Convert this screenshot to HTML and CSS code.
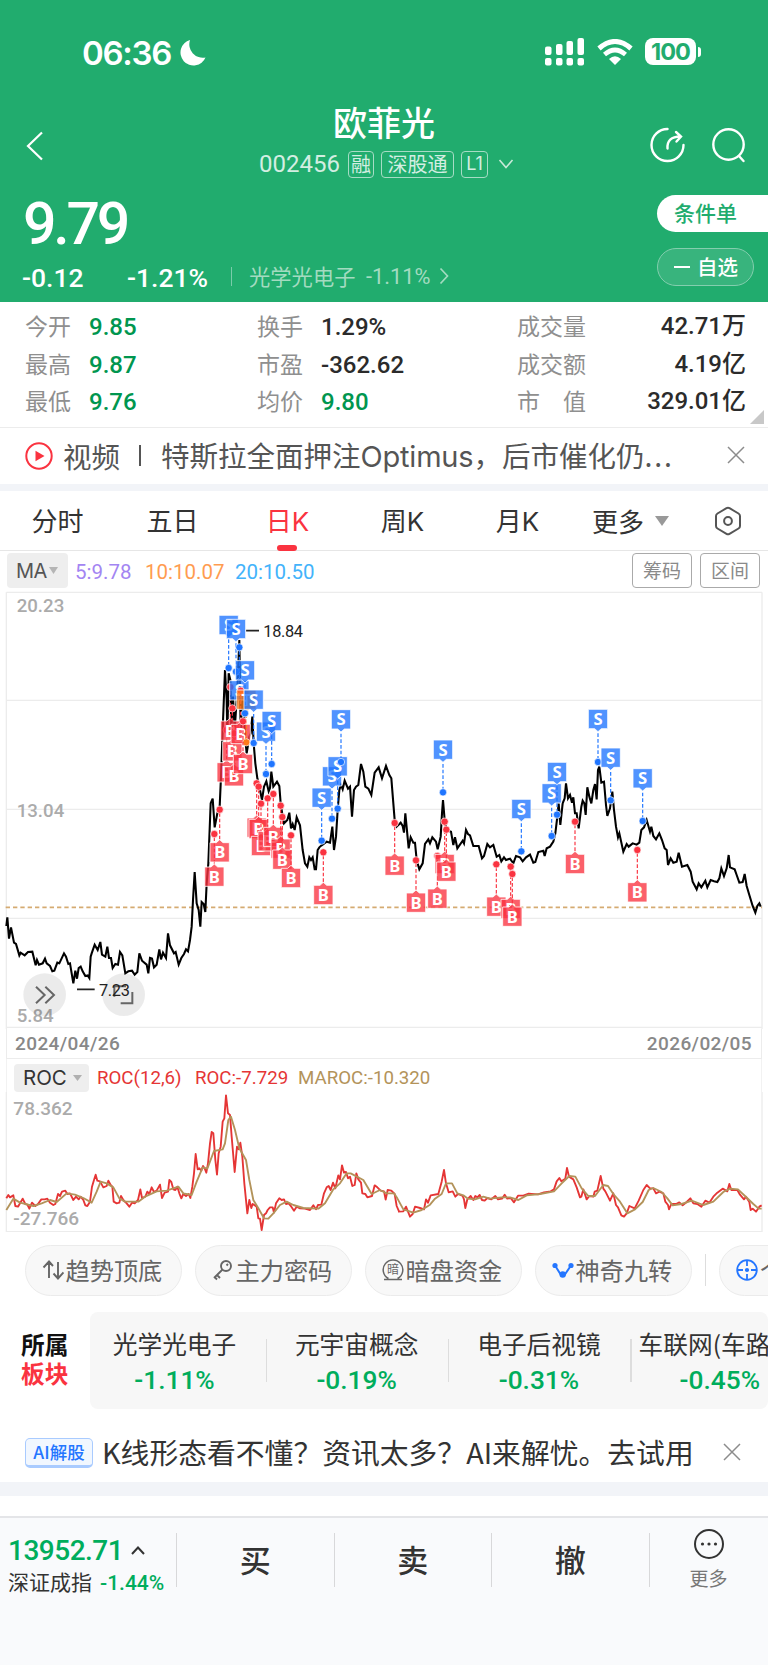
FILE: index.html
```html
<!DOCTYPE html>
<html lang="zh">
<head>
    <meta charset="utf-8">
    <title>欧菲光 002456</title>
    <link rel="stylesheet" href="styles.css">
</head>
<body>
    <header class="top">
        <div class="status">
            <span class="clock">06:36</span>
            <svg class="moon" width="26" height="26" viewBox="0 0 26 26"><path d="M10 0A13 13 0 1 0 25.500 17.500A13.500 13.500 0 0 1 10 0Z" fill="#fff"/></svg>
            <svg class="signal" width="40" height="28" viewBox="0 0 40 28" fill="#fff">
                <rect x="0" y="8.500" width="6.500" height="8.500" rx="2"/><rect x="11" y="6" width="6.500" height="11" rx="2"/><rect x="21.500" y="3" width="6.500" height="14" rx="2"/><rect x="32.500" y="0" width="6.500" height="17" rx="2"/>
                <rect x="0" y="20" width="6.500" height="7.500" rx="2"/><rect x="11" y="20" width="6.500" height="7.500" rx="2"/><rect x="21.500" y="20" width="6.500" height="7.500" rx="2"/><rect x="32.500" y="20" width="6.500" height="7.500" rx="2"/>
            </svg>
            <svg class="wifi" width="36" height="26" viewBox="0 0 36 26" fill="none" stroke="#fff">
                <path d="M2 9.500Q18 -4.500 34 9.500" stroke-width="5"/>
                <path d="M7.500 15.500Q18 6.500 28.500 15.500" stroke-width="4.600"/>
                <path d="M12 20Q18 14.500 24 20L18 26Z" fill="#fff" stroke="none"/>
            </svg>
            <span class="battery">100</span><i class="battery-cap"></i>
        </div>
        <div class="nav">
            <svg class="back" width="18" height="30" viewBox="0 0 18 30"><path d="M16 1.500L2 15L16 28.500" fill="none" stroke="#fff" stroke-width="2.200"/></svg>
            <div class="title">
                <h1>欧菲光</h1>
                <div class="code">
                    <span class="num">002456</span>
                    <b class="t1">融</b><b class="t2">深股通</b><b class="t3">L1</b>
                    <svg width="16" height="10" viewBox="0 0 16 10"><path d="M1.500 1L8 8.500L14.500 1" fill="none" stroke="#c8ead9" stroke-width="1.600"/></svg>
                </div>
            </div>
            <div class="nav-icons">
                <svg width="36" height="36" viewBox="0 0 36 36" fill="none" stroke="#fff" stroke-width="2.400" stroke-linecap="round">
                    <path d="M17.500 2A16 16 0 1 0 33.500 18"/>
                    <path d="M17.500 21.500C17 14 21 9.500 30.500 9.500M26 5L31 9.500L26.500 14.500"/>
                </svg>
                <svg width="36" height="36" viewBox="0 0 36 36" fill="none" stroke="#fff" stroke-width="2.400" stroke-linecap="round">
                    <circle cx="17.500" cy="17.500" r="15.200"/><path d="M28 29L32.500 34"/>
                </svg>
            </div>
        </div>
        <div class="quote">
            <div class="quote-left">
                <div class="price num">9.79</div>
                <div class="change">
                    <span class="num chg">-0.12</span><span class="num pct">-1.21%</span><i></i>
                    <span class="ind">光学光电子</span><span class="num indp">-1.11%</span>
                    <svg width="10" height="18" viewBox="0 0 10 18"><path d="M1.500 1.500L8.500 9L1.500 16.500" fill="none" stroke="#a3dbc0" stroke-width="1.700"/></svg>
                </div>
            </div>
            <div class="quote-right">
                <span class="cond">条件单</span>
                <span class="fav"><i></i>自选</span>
            </div>
        </div>
    </header>

    <section class="stats">
        <div><label>今开</label><span class="num g">9.85</span></div>
        <div><label>换手</label><span class="num">1.29%</span></div>
        <div class="r"><label>成交量</label><span class="num">42.71<em>万</em></span></div>
        <div><label>最高</label><span class="num g">9.87</span></div>
        <div><label>市盈</label><span class="num">-362.62</span></div>
        <div class="r"><label>成交额</label><span class="num">4.19<em>亿</em></span></div>
        <div><label>最低</label><span class="num g">9.76</span></div>
        <div><label>均价</label><span class="num g">9.80</span></div>
        <div class="r"><label>市　值</label><span class="num">329.01<em>亿</em></span></div>
        <svg class="corner" width="14" height="14"><path d="M14 0V14H0Z" fill="#c8c8c8"/></svg>
    </section>

    <section class="news">
        <svg width="28" height="28" viewBox="0 0 28 28"><circle cx="14" cy="14" r="12.700" fill="none" stroke="#fa3340" stroke-width="2"/><path d="M10.500 8.800L19.500 14L10.500 19.200Z" fill="#fa3340"/></svg>
        <span class="tag">视频</span><i></i>
        <span class="headline">特斯拉全面押注<u>Optimus</u>，后市催化仍<s>...</s></span>
        <svg class="close" width="18" height="18" viewBox="0 0 18 18"><path d="M1 1L17 17M17 1L1 17" stroke="#8c8c8c" stroke-width="1.500"/></svg>
    </section>

    <nav class="tabs">
        <span>分时</span><span>五日</span><span class="on">日<u>K</u></span><span>周<u>K</u></span><span>月<u>K</u></span>
        <span class="more">更多<svg width="14" height="10"><path d="M0 0H14L7 10Z" fill="#999"/></svg></span>
        <svg class="gear" width="28" height="30" viewBox="0 0 28 30" fill="none" stroke="#555" stroke-width="2"><path d="M12.500 2.200Q14 1.300 15.500 2.200L24.500 7.500Q26 8.400 26 10V20Q26 21.600 24.500 22.500L15.500 27.800Q14 28.700 12.500 27.800L3.500 22.500Q2 21.600 2 20V10Q2 8.400 3.500 7.500Z"/><circle cx="14" cy="15" r="3.900"/></svg>
    </nav>

    <section class="ma">
        <span class="sel">MA<svg width="9" height="7"><path d="M0 0H9L4.500 7Z" fill="#b5b5b5"/></svg></span>
        <span class="num m5">5:9.78</span><span class="num m10">10:10.07</span><span class="num m20">20:10.50</span>
        <span class="btn">筹码</span><span class="btn">区间</span>
    </section>

    <!-- chart units are thirds of a pixel -->
    <svg class="kline" id="kline" width="768" height="439" viewBox="0 0 2304 1317">
        <g class="grid">
            <path d="M19 7H2286M19 331H2286M19 658H2286M19 985H2286M19 1312H2286M19 7V1317M2286 7V1317"/>
        </g>
        <text class="axis" x="50" y="65">20.23</text>
        <text class="axis" x="50" y="680">13.04</text>
        <text class="axis" x="50" y="1297">5.84</text>
        <path d="M17 952H2286" stroke="#d5ab72" stroke-width="5" stroke-dasharray="13 9"/>
        <polyline class="price-line" points="19,1008 22,982 27,1046 33,1012 42,1058 48,1062 58,1096 62,1088 74,1096 84,1086 97,1085 107,1126 111,1110 117,1124 128,1120 135,1106 140,1120 150,1128 157,1144 163,1142 172,1118 178,1120 192,1090 198,1100 205,1122 210,1120 220,1180 226,1142 231,1166 236,1134 242,1130 248,1144 256,1158 263,1156 268,1164 272,1100 275,1090 284,1064 293,1080 301,1056 306,1094 316,1100 322,1070 327,1104 333,1104 338,1134 346,1122 354,1124 360,1086 367,1096 376,1150 385,1144 396,1142 404,1154 412,1146 418,1090 426,1112 440,1124 445,1150 450,1104 456,1106 462,1132 470,1124 478,1078 483,1108 489,1088 498,1104 504,1030 510,1066 522,1090 527,1086 536,1124 544,1104 552,1092 558,1078 564,1084 570,1050 575,1010 579,930 584,846 590,940 596,960 601,1010 605,936 611,942 616,966 620,880 625,820 632,640 638,626 644,712 652,670 659,650 663,560 668,420 675,240 680,330 682,440 686,250 691,270 694,420 699,320 704,420 712,300 718,150 722,420 730,300 735,440 740,490 748,440 752,430 757,380 761,460 766,520 772,565 778,590 786,630 792,590 799,574 806,604 810,594 814,545 820,590 831,575 838,588 842,640 848,680 852,700 862,690 868,668 873,715 878,702 884,720 890,682 900,706 908,780 915,820 922,830 928,802 933,810 938,802 944,838 948,838 953,780 958,772 965,766 980,755 990,758 997,710 1002,780 1008,740 1013,660 1018,600 1023,585 1028,598 1034,572 1044,596 1050,590 1056,680 1062,600 1068,590 1075,585 1083,522 1090,545 1096,590 1105,596 1114,615 1124,548 1136,532 1146,565 1158,528 1168,555 1174,565 1180,640 1184,690 1190,710 1202,698 1208,708 1212,728 1216,670 1226,775 1232,742 1240,758 1245,758 1250,810 1258,838 1268,820 1275,762 1285,748 1290,760 1297,742 1308,755 1313,778 1322,740 1326,670 1329,630 1334,690 1340,720 1353,725 1360,765 1365,742 1372,775 1388,752 1392,760 1398,720 1404,732 1410,736 1420,768 1436,768 1446,805 1452,798 1462,762 1470,772 1480,765 1490,800 1498,795 1504,814 1512,802 1518,810 1530,806 1540,820 1548,798 1560,802 1568,814 1578,802 1590,794 1600,818 1606,816 1615,786 1630,782 1634,798 1640,775 1650,770 1660,755 1666,730 1672,680 1676,640 1681,705 1688,640 1694,625 1698,580 1704,625 1710,615 1716,638 1720,622 1725,670 1730,670 1736,715 1744,650 1748,632 1753,640 1757,675 1762,592 1768,620 1774,640 1780,600 1785,582 1790,628 1794,540 1798,530 1804,578 1812,575 1818,645 1822,678 1830,655 1837,605 1842,660 1848,710 1854,742 1858,730 1870,785 1880,762 1886,770 1898,760 1910,764 1918,758 1924,720 1932,712 1940,690 1950,725 1954,710 1960,738 1968,748 1978,730 1986,750 1994,775 2000,780 2004,825 2012,805 2020,818 2030,815 2036,788 2046,830 2062,825 2072,845 2078,875 2090,898 2096,880 2104,892 2116,872 2122,892 2132,870 2142,874 2152,876 2158,865 2164,835 2172,858 2180,835 2186,795 2190,832 2204,838 2210,855 2218,878 2228,876 2234,852 2240,888 2248,915 2258,948 2266,968 2272,948 2278,940 2282,950"/>
        <g fill="#000" fill-opacity=".08"><circle cx="134" cy="1214" r="64"/><circle cx="371" cy="1214" r="64"/></g>
        <g fill="none" stroke="#666" stroke-width="6"><path d="M108 1190L134 1215L108 1240M136 1190L162 1215L136 1240M362 1240H397V1206M343 1220V1189H378"/></g>
        <path d="M738 122H777M231 1198H284" stroke="#222" stroke-width="5"/>
        <text class="peak" x="790" y="142">18.84</text>
        <text class="peak" x="297" y="1217">7.23</text>
        <g id="marks"></g>
    </svg>

    <div class="dates num"><span>2024/04/26</span><span>2026/02/05</span></div>

    <section class="roc">
        <div class="roc-head">
            <span class="sel">ROC<svg width="9" height="6"><path d="M0 0H9L4.500 6Z" fill="#b0b0b0"/></svg></span>
            <span class="r1">ROC(12,6)</span><span class="r2">ROC:-7.729</span><span class="r3">MAROC:-10.320</span>
        </div>
        <svg width="768" height="140" viewBox="0 126 2304 420">
            <path class="gridline" d="M19 126V545H2286V126"/>
            <text class="axis roc-axis" x="40" y="194">78.362</text>
            <text class="axis roc-axis" x="40" y="524">-27.766</text>
            <polyline class="red" points="19,445 25,435 30,442 40,436 46,468 54,470 68,446 76,462 82,464 88,476 96,458 106,468 114,462 124,448 134,448 142,446 150,458 160,465 166,462 174,432 180,438 186,425 196,422 202,432 210,430 220,450 228,440 236,448 242,440 250,450 256,466 262,468 270,455 276,410 282,390 287,374 292,392 300,394 310,412 320,408 325,392 332,405 337,410 341,455 350,460 358,458 363,438 370,450 380,460 388,470 396,458 404,460 414,450 421,418 426,444 436,440 442,425 448,432 455,412 462,426 470,422 480,404 486,444 494,428 504,425 508,390 514,396 520,418 526,420 532,410 538,430 544,445 550,432 558,438 566,432 571,444 577,410 582,370 587,312 593,358 598,355 604,362 609,348 614,355 619,368 624,340 630,280 635,246 640,250 646,330 651,374 656,310 662,290 668,215 673,205 678,136 684,190 690,195 695,260 704,366 711,290 716,298 721,278 727,320 733,400 742,490 748,450 754,474 758,462 770,470 775,505 780,506 785,540 792,495 798,490 803,480 810,472 818,472 822,488 828,460 838,445 845,450 852,448 858,462 866,460 874,470 882,482 890,470 900,475 915,476 930,480 940,466 948,478 954,465 964,464 972,430 980,412 986,408 992,420 999,398 1006,415 1015,376 1020,388 1026,346 1032,368 1038,366 1044,385 1050,380 1057,408 1064,405 1069,370 1075,388 1083,398 1087,430 1096,432 1102,442 1116,438 1124,406 1132,412 1142,422 1152,424 1157,449 1163,420 1174,422 1184,432 1190,468 1197,484"/>
            <polyline class="red" transform="translate(1140)" points="54,485 70,484 78,470 90,500 98,492 105,470 120,474 132,478 138,448 144,458 152,436 175,432 185,395 192,360 198,400 206,427 218,424 226,440 234,432 248,438 252,448 256,474 262,448 272,438 280,450 286,438 292,442 299,435 306,450 314,452 322,444 334,448 346,438 354,448 366,446 374,434 382,446 392,444 402,457 414,437 430,437 446,431 474,433 492,427 512,424 522,418 530,394 538,384 544,394 556,386 561,354 567,380 580,388 590,412 600,442 604,440 610,418 620,448 628,438 640,440 644,425 652,422 662,378 670,416 676,424 690,452 700,430 708,465 714,472 724,496 732,500 740,490 748,468 764,475 776,452 790,420 800,405 810,415 820,415 828,430 838,425 850,430 856,455 864,465 867,478 874,462 888,462 898,457 908,466 920,456 931,445 940,460 952,462 964,470 976,452 988,458 1000,440 1012,428 1028,416 1042,424 1048,402 1054,420 1072,420 1080,434 1092,448 1098,440 1108,456 1112,480 1118,476 1128,485 1138,470 1145,466"/>
            <polyline class="gold" points="19,480 40,446 60,458 100,468 125,460 150,450 170,456 200,430 225,434 250,444 275,458 290,425 302,395 320,400 340,412 358,445 375,455 415,455 435,440 470,424 500,422 535,410 550,430 575,435 590,395 608,352 622,356 642,303 668,298 675,280 685,210 693,200 705,240 718,295 738,330 748,390 760,450 775,475 792,505 805,506 820,490 840,465 860,455 880,465 910,474 955,476 975,460 1000,418 1020,400 1040,370 1052,370 1090,390 1115,432 1140,420"/>
            <polyline class="gold" transform="translate(1140)" points="0,420 20,430 42,430 52,445 70,478 100,488 125,480 150,464 165,446 185,432 198,400 216,400 232,430 250,436 264,446 285,448 310,440 330,446 365,442 390,442 415,450 440,436 480,432 522,424 545,400 568,378 586,380 605,415 625,438 645,438 670,405 684,408 700,432 720,455 742,490 765,478 788,456 806,420 820,414 845,426 862,445 878,466 905,462 935,452 970,465 1000,455 1030,426 1050,416 1074,418 1095,438 1120,462 1136,476 1145,476"/>
        </svg>
    </section>

    <section class="tools">
        <span class="pill"><svg width="22" height="22" viewBox="0 0 22 22" fill="none" stroke="#666" stroke-width="1.900"><path d="M7 19V3M1.500 8.500L7 2.500L11 7M16 3V19M11.500 14.500L16 19.500L21.500 13.500"/></svg>趋势顶底</span>
        <span class="pill"><svg width="22" height="22" viewBox="0 0 22 22" fill="none" stroke="#666" stroke-width="1.900"><circle cx="14" cy="7" r="5"/><path d="M10.500 10.500L2 19M5 16L8 19M2.500 18L5 20.500M14.500 6.500L16 5"/></svg>主力密码</span>
        <span class="pill"><svg width="22" height="22" viewBox="0 0 22 22" fill="none" stroke="#666" stroke-width="1.500"><path d="M6.500 19.500A9.800 9.800 0 1 1 15.500 19.500M2 20.500H20"/><text x="5" y="15" font-size="12" fill="#666" stroke="none">暗</text></svg>暗盘资金</span>
        <span class="pill"><svg width="22" height="22" viewBox="0 0 22 22"><path d="M3 6.500L9 16H12.500L19 6.500" fill="none" stroke="#2476ff" stroke-width="2"/><g fill="#2476ff"><circle cx="3" cy="6.500" r="2.600"/><circle cx="19" cy="6.500" r="2.600"/><circle cx="10.700" cy="15.500" r="3.200"/></g></svg>神奇九转</span>
        <i></i>
        <span class="pill last"><svg width="22" height="22" viewBox="0 0 22 22" fill="none" stroke="#2476ff" stroke-width="1.800"><circle cx="11" cy="11" r="9.800"/><path d="M11 1V7M11 15V21M1 11H7M15 11H21"/><circle cx="11" cy="11" r="1.200" fill="#2476ff"/></svg>个</span>
    </section>

    <section class="sector">
        <div class="sector-name">所属<br><span>板块</span></div>
        <div class="sector-list">
            <div>光学光电子<span class="num">-1.11%</span></div>
            <div>元宇宙概念<span class="num">-0.19%</span></div>
            <div>电子后视镜<span class="num">-0.31%</span></div>
            <div>车联网(车路<span class="num">-0.45%</span></div>
        </div>
    </section>

    <section class="ai">
        <b>AI解股</b><span>K线形态看不懂？资讯太多？AI来解忧。去试用</span>
        <svg class="close" width="18" height="18" viewBox="0 0 18 18"><path d="M1 1L17 17M17 1L1 17" stroke="#8c8c8c" stroke-width="1.500"/></svg>
    </section>

    <footer class="bar">
        <div class="index">
            <div class="num idx">13952.71<svg width="14" height="9" viewBox="0 0 14 9"><path d="M1 8L7 1.500L13 8" fill="none" stroke="#333" stroke-width="2"/></svg></div>
            <div class="idx-name">深证成指<span class="num">-1.44%</span></div>
        </div>
        <div class="act">买</div><div class="act">卖</div><div class="act">撤</div>
        <div class="etc">
            <svg width="32" height="32" viewBox="0 0 32 32"><circle cx="16" cy="16" r="14" fill="none" stroke="#333" stroke-width="2"/><g fill="#333"><circle cx="9.500" cy="16" r="1.600"/><circle cx="16" cy="16" r="1.600"/><circle cx="22.500" cy="16" r="1.600"/></g></svg>
            更多
        </div>
    </footer>
    <script src="chart.js"></script>
</body>
</html>
```

FILE: styles.css
```css
* { box-sizing: border-box; }
body {
    margin: 0;
    width: 768px;
    height: 1665px;
    overflow: hidden;
    background: #fff;
    color: #333;
    font-family: "Noto Sans CJK SC", sans-serif;
}
i, em, s, u { font-style: normal; text-decoration: none; }
svg { display: block; flex: none; }
span, b, label { white-space: nowrap; }
u { font-family: Inter, "Liberation Sans", sans-serif; }
.num { font-family: Roboto, "Noto Sans CJK SC", sans-serif; font-weight: 500; }

/* green header */
.top { height: 302px; background: #21ac6e; color: #fff; }
.status { height: 98px; padding: 37px 0 0 82px; display: flex; align-items: flex-start; }
.clock { width: 98px; font: 600 33px/32px Inter, sans-serif; letter-spacing: -1.3px; }
.moon { margin: 3px 339px 0 0; }
.signal { margin: 1px 12px 0 0; }
.wifi { margin: 2px 12px 0 0; }
.battery {
    margin-top: 1px;
    width: 51px; height: 27px;
    border-radius: 8px;
    background: #fff; color: #21ac6e;
    font: 700 23.5px/27px Inter, sans-serif;
    letter-spacing: -1px;
    text-align: center;
}
.battery-cap { width: 3px; height: 10px; margin: 10px 0 0 2px; border-radius: 0 4px 4px 0; background: #fff; }
.nav { position: relative; height: 92px; display: flex; }
.back { margin: 33px 0 0 26px; }
.title { width: 682px; }
.title h1 { margin: 3px 0 0 289px; font-size: 34px; line-height: 42px; font-weight: 500; }
.code { display: flex; align-items: center; height: 28px; margin: 7px 0 0 215px; color: #d3eee2; font-size: 20px; }
.code .num { width: 89px; font-size: 24px; font-weight: 400; letter-spacing: 0; }
.code b { height: 27px; border: 1.5px solid #a6dcc5; border-radius: 4px; font-weight: 400; font-size: 20px; line-height: 23px; text-align: center; margin-right: 7px; }
.code .t1 { width: 26px; }
.code .t2 { width: 73px; }
.code .t3 { width: 27px; margin-right: 10px; font-family: Inter, sans-serif; font-size: 18px; }
.nav-icons { display: flex; gap: 25px; margin-top: 29px; position: absolute; left: 650px; }
.quote { height: 112px; display: flex; justify-content: space-between; }
.price { margin-left: 23px; height: 68px; font-size: 59px; line-height: 68px; letter-spacing: -3.2px; }
.change { display: flex; align-items: center; height: 36px; margin-left: 22px; }
.chg, .pct { margin-top: 2px; font-size: 26.5px; }
.chg { width: 105px; }
.pct { width: 103.5px; }
.change i { width: 1.5px; height: 19px; margin-right: 17px; background: #7accaa; }
.ind { width: 117px; font-size: 21.3px; color: #a3dbc0; margin-top: -2px; }
.change .indp { width: 73px; font-size: 21.8px; font-weight: 400; color: #a3dbc0; }
.quote-right { display: flex; flex-direction: column; align-items: flex-start; gap: 16px; padding-top: 5px; width: 111px; }
.cond { width: 111px; height: 37px; padding-left: 17px; border-radius: 19px 0 0 19px; background: #fff; color: #21ac6e; font-size: 21px; line-height: 35px; font-weight: 500; }
.fav { display: flex; align-items: center; width: 97px; height: 38px; padding-left: 16px; border: 1.5px solid #83ceae; border-radius: 19px; background: #38b47d; font-size: 20.5px; font-weight: 500; line-height: 30px; padding-bottom: 2px; }
.fav i { width: 16px; height: 2px; margin: 2px 7px 0 0; background: #fff; }

/* quote numbers */
.stats {
    position: relative;
    height: 126px; padding: 6px 22px 0 25px;
    display: grid; grid-template-columns: 232px 260px 229px; grid-auto-rows: 37.5px;
    border-bottom: 1.5px solid #ececec;
}
.stats div { display: flex; align-items: center; }
.stats label { width: 64px; font-size: 23px; color: #8f8f8f; margin-top: -3px; line-height: 34px; }
.stats .num { font-size: 24px; line-height: 34px; color: #2b2b2b; margin-top: 1px; }
.stats .num.g { color: #00964f; }
.stats em { font-size: 24px; }
.stats .r { justify-content: space-between; }
.stats .r .num { margin-top: -1px; }
.stats .r label { width: 80px; }
.corner { position: absolute; left: 750px; top: 108px; }

.news { height: 56px; display: flex; align-items: center; padding: 0 0 1px 25px; color: #555; font-size: 28.5px; line-height: 50px; }
.tag { width: 66px; margin-left: 10px; }
.news i { width: 2px; height: 21px; margin: 0 20px 0 10px; background: #555; }
.headline { width: 566px; }
.headline u { font-weight: 400; font-size: 29px; letter-spacing: -0.2px; }
.headline s { letter-spacing: 1.8px; }
.news .close, .ai .close { margin-top: -2px; }

.tabs {
    height: 67px; border-top: 7px solid #f2f4f8; border-bottom: 1.5px solid #e6e6e6;
    display: flex; align-items: center; font-size: 26px; line-height: 38px; color: #333;
}
.tabs span { width: 115px; text-align: center; height: 59px; line-height: 57px; }
.tabs .on { position: relative; color: #fa3340; }
.tabs .on::after { content: ""; position: absolute; left: 47px; top: 54px; width: 20px; height: 6px; border-radius: 3px; background: #fa3340; }
.tabs .more { display: flex; align-items: center; gap: 11px; width: 124px; padding-left: 17px; }
.tabs .gear { margin-left: 15px; }

.ma { display: flex; align-items: center; height: 39px; padding: 0 8px 0 7px; font-size: 20.5px; }
.sel { display: flex; align-items: center; background: #eee; border-radius: 4px; font-family: Inter, sans-serif; color: #555; }
.ma .sel { width: 61px; height: 35px; padding-left: 9px; gap: 2px; font-size: 20px; margin-right: 7px; letter-spacing: -0.5px; }
.ma .num { font-weight: 400; padding-top: 2px; }
.m5 { width: 70px; color: #a385f2; }
.m10 { width: 90px; color: #ff9c50; }
.m20 { color: #43b3fb; }
.btn { width: 60px; height: 35px; margin-left: 8px; border: 1.5px solid #aaa; border-radius: 4px; color: #8a8a8a; font-size: 19px; line-height: 31px; text-align: center; }
.m20 + .btn { margin-left: auto; }

/* charts */
.grid path, .gridline { fill: none; stroke: #ececec; stroke-width: 4; }
.axis { font: 500 56px Roboto, sans-serif; fill: #ababab; }
.roc-axis { font-size: 57px; }
.peak { font: 400 49px Roboto, sans-serif; fill: #222; letter-spacing: -1px; }
.price-line { fill: none; stroke: #000; stroke-width: 6.2; stroke-linejoin: miter; }
.mark-text { font: 700 50px "Noto Sans", sans-serif; fill: #fff; text-anchor: middle; }
.red, .gold { fill: none; stroke: #e53535; stroke-width: 5.6; stroke-linejoin: round; }
.gold { stroke: #b3935a; }
.dates { display: flex; justify-content: space-between; width: 756px; height: 30px; margin-left: 6px; padding: 0 9px 0 8px; line-height: 30px; font-size: 19px; color: #888; letter-spacing: 0.4px; border: solid #ececec; border-width: 0 1.5px 1.5px; }
.roc-head { width: 756px; height: 33px; margin-left: 6px; padding: 4px 0 0 7px; display: flex; align-items: center; border: solid #f2f2f2; border-width: 0 1.5px; font: 400 18.7px/28px Roboto, sans-serif; }
.roc-head .sel { width: 75px; height: 28px; padding-left: 9px; gap: 6px; margin-right: 8px; font-size: 20.5px; line-height: 26px; color: #333; }
.r1, .r2 { color: #e53535; }
.r1 { width: 98px; }
.r2 { width: 103px; }
.r3 { color: #b3935a; }

.tools { height: 80px; padding: 13px 0 0 24.5px; display: flex; overflow: hidden; }
.pill { flex: none; display: flex; align-items: center; width: 157px; height: 51px; padding-left: 16px; gap: 2px; margin-right: 13px; border: 1.5px solid #ebebeb; border-radius: 26px; background: #f8f8f8; color: #666; font-size: 24.2px; line-height: 46px; padding-bottom: 2px; }
.pill svg { margin-top: 1px; }
.tools i { flex: none; width: 1.5px; height: 32px; margin: 9px 13px 0 0; background: #ddd; }
.pill:nth-child(3) svg text { font-family: "Noto Sans CJK SC", sans-serif; }

.sector { display: flex; height: 97px; }
.sector-name { width: 90px; padding: 18px 0 0 21px; font-size: 23.7px; line-height: 28.5px; font-weight: 700; color: #111; }
.sector-name span { color: #fa3340; }
.sector-list { width: 678px; display: flex; background: #f7f7f7; border-radius: 8px; overflow: hidden; }
.sector-list div { flex: none; position: relative; width: 182.3px; padding: 13px 3px 0 0; text-align: center; font-size: 24.7px; line-height: 36px; white-space: nowrap; color: #333; }
.sector-list div:first-child { width: 177px; padding-right: 8px; }
.sector-list div:last-child { padding-left: 7px; text-align: left; }
.sector-list .num { display: block; padding-top: 1px; font-size: 26.3px; color: #00ad5c; }
.sector-list div:last-child .num { padding-left: 41px; }
.sector-list div:not(:last-child)::after { content: ""; position: absolute; right: 0; top: 27px; width: 1.5px; height: 43px; background: #ddd; }

.ai { display: flex; align-items: center; height: 87px; padding: 15px 0 0 25px; border-bottom: 14px solid #f2f4f8; font-size: 28.8px; line-height: 44px; }
.ai b { width: 68px; height: 30px; margin-right: 9px; border: 1.5px solid #a9cbff; border-bottom-width: 3px; border-radius: 5px; background: #f1f7ff; color: #2476ff; font-size: 17.5px; line-height: 25px; font-weight: 500; text-align: center; }
.ai span { width: 621px; margin-top: -2px; }

.bar { height: 149px; margin-top: 20px; border-top: 2px solid #e4e5e8; background: #f9fafc; display: flex; padding-top: 15px; }
.index { width: 177px; padding-left: 8px; }
.index, .act { height: 54px; border-right: 1.5px solid #d8d8da; }
.idx { display: flex; align-items: center; gap: 8px; height: 34px; font-size: 28px; letter-spacing: -0.5px; color: #00ad5c; }
.idx-name { font-size: 21px; line-height: 28px; white-space: nowrap; }
.idx-name .num { margin-left: 8px; color: #00ad5c; font-size: 21px; }
.act { width: 157.5px; text-align: center; font-size: 31px; line-height: 52px; font-weight: 500; }
.etc { width: 118px; margin-top: -5px; display: flex; flex-direction: column; align-items: center; font-size: 19px; line-height: 29px; color: #777; }
.etc svg { margin-bottom: 3px; }
```

FILE: chart.js
```js
// trade marks: type, x, top of the tag, y of the dot
var marks = [
    ["B", 643, 831, 732], ["B", 659, 758, 659],
    ["S", 686, 76, 234], ["B", 680, 518, 420], ["B", 691, 393, 291], ["B", 697, 455, 355], ["B", 702, 530, 430],
    ["S", 708, 88, 245], ["S", 718, 272, 172], ["B", 722, 403, 302],
    ["T", 739, 300, 457], ["S", 735, 212, 370], ["B", 729, 493, 394],
    ["S", 761, 300, 459],
    ["B", 770, 684, 580], ["B", 776, 688, 590], ["B", 783, 739, 641], ["S", 798, 396, 552],
    ["B", 803, 725, 625], ["S", 815, 364, 522], ["B", 820, 712, 612],
    ["B", 842, 747, 647], ["B", 847, 780, 681], ["B", 873, 835, 736],
    ["S", 965, 594, 752], ["B", 970, 886, 787],
    ["S", 996, 530, 686], ["S", 1013, 500, 656], ["S", 1023, 359, 516],
    ["B", 1184, 798, 699], ["B", 1248, 909, 811], ["B", 1312, 897, 798],
    ["S", 1329, 450, 607], ["B", 1334, 793, 695], ["B", 1339, 816, 719],
    ["B", 1489, 921, 823], ["B", 1532, 928, 830], ["B", 1537, 951, 852],
    ["S", 1564, 628, 784], ["S", 1655, 581, 738], ["S", 1671, 517, 674],
    ["B", 1725, 793, 695], ["S", 1794, 358, 516], ["S", 1832, 474, 631],
    ["B", 1912, 878, 780], ["S", 1928, 536, 693]
];
var colors = { S: "#1f75ff", B: "#fa3340", T: "#ff7a1a" };

var html = "";
for (var i = 0; i < marks.length; i++) {
    var t = marks[i][0], x = marks[i][1], y = marks[i][2], dot = marks[i][3];
    var down = dot > y;
    var edge = down ? y + 72 : y - 10;
    html += '<path d="M' + x + ' ' + edge + 'V' + dot + '" stroke="' + colors[t] + '" stroke-width="3.5" stroke-dasharray="11 6"/>';
    var box = down
        ? "M" + (x - 29) + " " + y + "h58v58h-19l-10 9l-10 -9h-19z"
        : "M" + (x - 29) + " " + y + "h19l10 -9l10 9h19v58h-58z";
    html += '<path d="' + box + '" fill="' + colors[t] + '" fill-opacity=".78" stroke="#fff" stroke-opacity=".8" stroke-width="3"/>';
    html += '<text class="mark-text" x="' + x + '" y="' + (y + 47) + '">' + t + '</text>';
    html += '<circle cx="' + x + '" cy="' + dot + '" r="11" fill="' + colors[t] + '" stroke="#fff" stroke-width="2"/>';
}
document.getElementById("marks").innerHTML = html;
```
